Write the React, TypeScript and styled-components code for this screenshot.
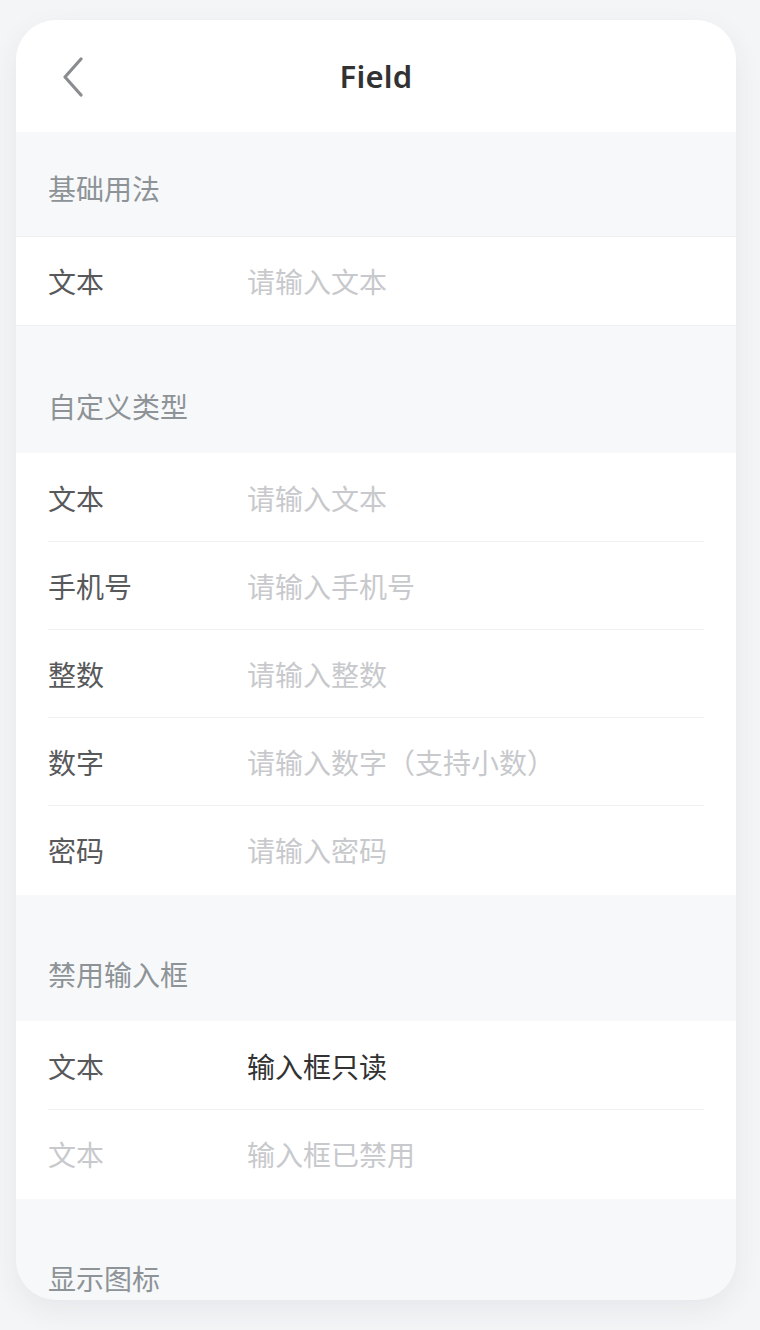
import React from 'react';
import styled, { createGlobalStyle } from 'styled-components';

const GlobalStyle = createGlobalStyle`
  html, body {
    margin: 0;
    padding: 0;
    background: #f4f5f7;
    font-family: "Noto Sans", "Noto Sans CJK SC", sans-serif;
    -webkit-font-smoothing: antialiased;
  }
`;

type Field = { label: string; value: string; kind?: 'placeholder' | 'readonly' | 'disabled' };

const sections: { title: string; bordered?: boolean; fields: Field[] }[] = [
  { title: '基础用法', bordered: true, fields: [{ label: '文本', value: '请输入文本' }] },
  {
    title: '自定义类型',
    fields: [
      { label: '文本', value: '请输入文本' },
      { label: '手机号', value: '请输入手机号' },
      { label: '整数', value: '请输入整数' },
      { label: '数字', value: '请输入数字（支持小数）' },
      { label: '密码', value: '请输入密码' },
    ],
  },
  {
    title: '禁用输入框',
    fields: [
      { label: '文本', value: '输入框只读', kind: 'readonly' },
      { label: '文本', value: '输入框已禁用', kind: 'disabled' },
    ],
  },
  { title: '显示图标', fields: [{ label: '', value: '' }] },
];

export default function App() {
  return (
    <>
      <GlobalStyle />
      <Page>
        <Phone>
          <NavBar>
            <BackButton aria-label="返回">
              <svg width="24" height="40" viewBox="0 0 24 40" fill="none">
                <path d="M20 2 L4 20 L20 38" stroke="#8a8c8f" strokeWidth="3.2" strokeLinecap="round" strokeLinejoin="round" />
              </svg>
            </BackButton>
            <NavTitle>Field</NavTitle>
          </NavBar>
          <Body>
            {sections.map((s) => (
              <Block key={s.title}>
                <BlockTitle>{s.title}</BlockTitle>
                <CellGroup $bordered={s.bordered}>
                  {s.fields.map((f, i) => (
                    <Cell key={i}>
                      <Label $disabled={f.kind === 'disabled'}>{f.label}</Label>
                      <Value $kind={f.kind || 'placeholder'}>{f.value}</Value>
                    </Cell>
                  ))}
                </CellGroup>
              </Block>
            ))}
          </Body>
        </Phone>
      </Page>
    </>
  );
}

const Page = styled.div`
  padding: 20px 24px 30px 16px;
  height: 1330px;
  box-sizing: border-box;
`;

const Phone = styled.div`
  height: 1280px;
  border-radius: 40px;
  overflow: hidden;
  background: #f7f8fa;
  box-shadow: 0 10px 28px rgba(40, 50, 70, 0.07);
  display: flex;
  flex-direction: column;
`;

const NavBar = styled.div`
  height: 112px;
  flex-shrink: 0;
  background: #fff;
  display: flex;
  align-items: center;
  justify-content: center;
  position: relative;
`;

const BackButton = styled.div`
  position: absolute;
  left: 45px;
  top: 37px;
  display: flex;
`;

const NavTitle = styled.div`
  font-size: 31px;
  font-weight: 600;
  color: #323233;
  letter-spacing: 0.2px;
`;

const Body = styled.div`
  flex: 1;
  overflow: hidden;
`;

const Block = styled.div`
  & + & {
    margin-top: 24px;
  }
`;

const BlockTitle = styled.h2`
  margin: 0;
  padding: 41px 32px 31px;
  font-size: 28px;
  line-height: 32px;
  font-weight: 400;
  color: #8d9396;
`;

const CellGroup = styled.div<{ $bordered?: boolean }>`
  background: #fff;
  border-top: 1px solid ${(p) => (p.$bordered ? '#eef0f2' : 'transparent')};
  border-bottom: 1px solid ${(p) => (p.$bordered ? '#eef0f2' : 'transparent')};
  margin: ${(p) => (p.$bordered ? '0' : '-1px 0')};
`;

const Cell = styled.div`
  position: relative;
  height: 88px;
  padding: 0 32px;
  display: flex;
  align-items: center;
  font-size: 28px;

  &:not(:last-child)::after {
    content: '';
    position: absolute;
    left: 32px;
    right: 32px;
    bottom: 0;
    height: 1px;
    background: #eef0f2;
  }
`;

const Label = styled.div<{ $disabled?: boolean }>`
  width: 175px;
  margin-right: 24px;
  flex-shrink: 0;
  color: ${(p) => (p.$disabled ? '#c8c9cc' : '#58595b')};
`;

const Value = styled.div<{ $kind: string }>`
  flex: 1;
  color: ${(p) => (p.$kind === 'readonly' ? '#323233' : '#c8c9cc')};
`;
